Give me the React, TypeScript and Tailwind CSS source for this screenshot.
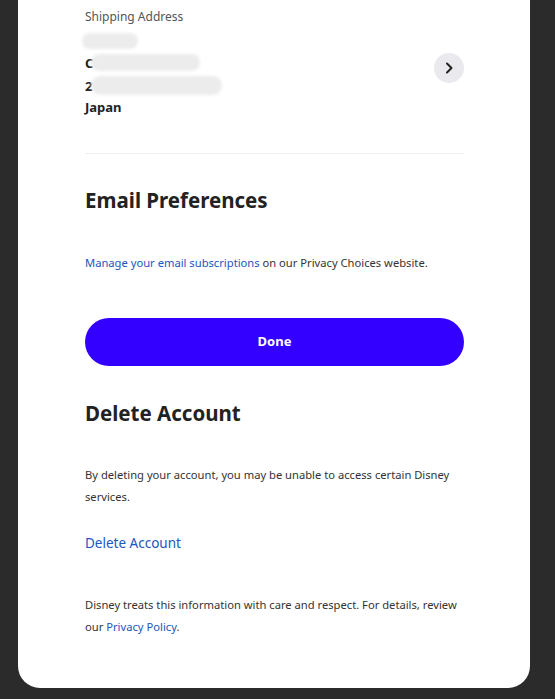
import React from 'react';

const font = { fontFamily: '"Noto Sans", "Open Sans", sans-serif' };

const Redacted: React.FC<{ className: string }> = ({ className }) => (
  <span className={`absolute rounded-full bg-[#ececec] blur-[1.5px] ${className}`} />
);

export default function App() {
  return (
    <div className="min-h-[699px] bg-[#2b2b2b] pl-[18px] pr-[25px]" style={font}>
      <div className="bg-white rounded-b-[22px] h-[688px] px-[67px] pr-[66px] text-[#222]">
        {/* shipping address */}
        <div className="pt-[8px] flex items-center justify-between">
          <div>
            <div className="text-[12px] leading-[18px] text-[#555]">Shipping Address</div>
            <div className="relative mt-[4px] text-[13px] font-bold leading-[22.5px]">
              <div className="h-[22px]" />
              <div>C</div>
              <div>2</div>
              <div className="-mt-[1px]">Japan</div>
              <Redacted className="left-[-3px] top-[3px] w-[56px] h-[16px]" />
              <Redacted className="left-[6px] top-[24px] w-[109px] h-[17px]" />
              <Redacted className="left-[6px] top-[46px] w-[131px] h-[19px]" />
            </div>
          </div>
          <button className="w-[30px] h-[30px] rounded-full bg-[#e9e9ee] flex items-center justify-center mt-[10px]">
            <svg width="12" height="14" viewBox="0 0 12 14" fill="none">
              <path d="M4 2.5 L8.5 7 L4 11.5" stroke="#222" strokeWidth="2" strokeLinecap="round" strokeLinejoin="round" />
            </svg>
          </button>
        </div>

        <div className="mt-[34px] border-t border-[#eeeeee]" />

        {/* email preferences */}
        <h2 className="mt-[31px] text-[20.5px] font-bold leading-[30px] text-[#222]">Email Preferences</h2>
        <p className="mt-[37px] text-[11.2px] leading-[22px] text-[#333]">
          <a className="text-[#2155c0]">Manage your email subscriptions</a> on our Privacy Choices website.
        </p>

        <button className="mt-[44px] w-full h-[48px] rounded-full bg-[#3300ff] text-white text-[13px] font-bold">
          Done
        </button>

        {/* delete account */}
        <h2 className="mt-[32px] text-[20.5px] font-bold leading-[30px] text-[#222]">Delete Account</h2>
        <p className="mt-[36px] text-[11.2px] leading-[22px] text-[#333]">
          By deleting your account, you may be unable to access certain Disney services.
        </p>
        <div className="mt-[24px] text-[13.5px] leading-[22px] text-[#2155c0]">Delete Account</div>

        <p className="mt-[40px] text-[11.2px] leading-[22px] text-[#333]">
          Disney treats this information with care and respect. For details, review our{' '}
          <a className="text-[#2155c0]">Privacy Policy</a>.
        </p>
      </div>
    </div>
  );
}
